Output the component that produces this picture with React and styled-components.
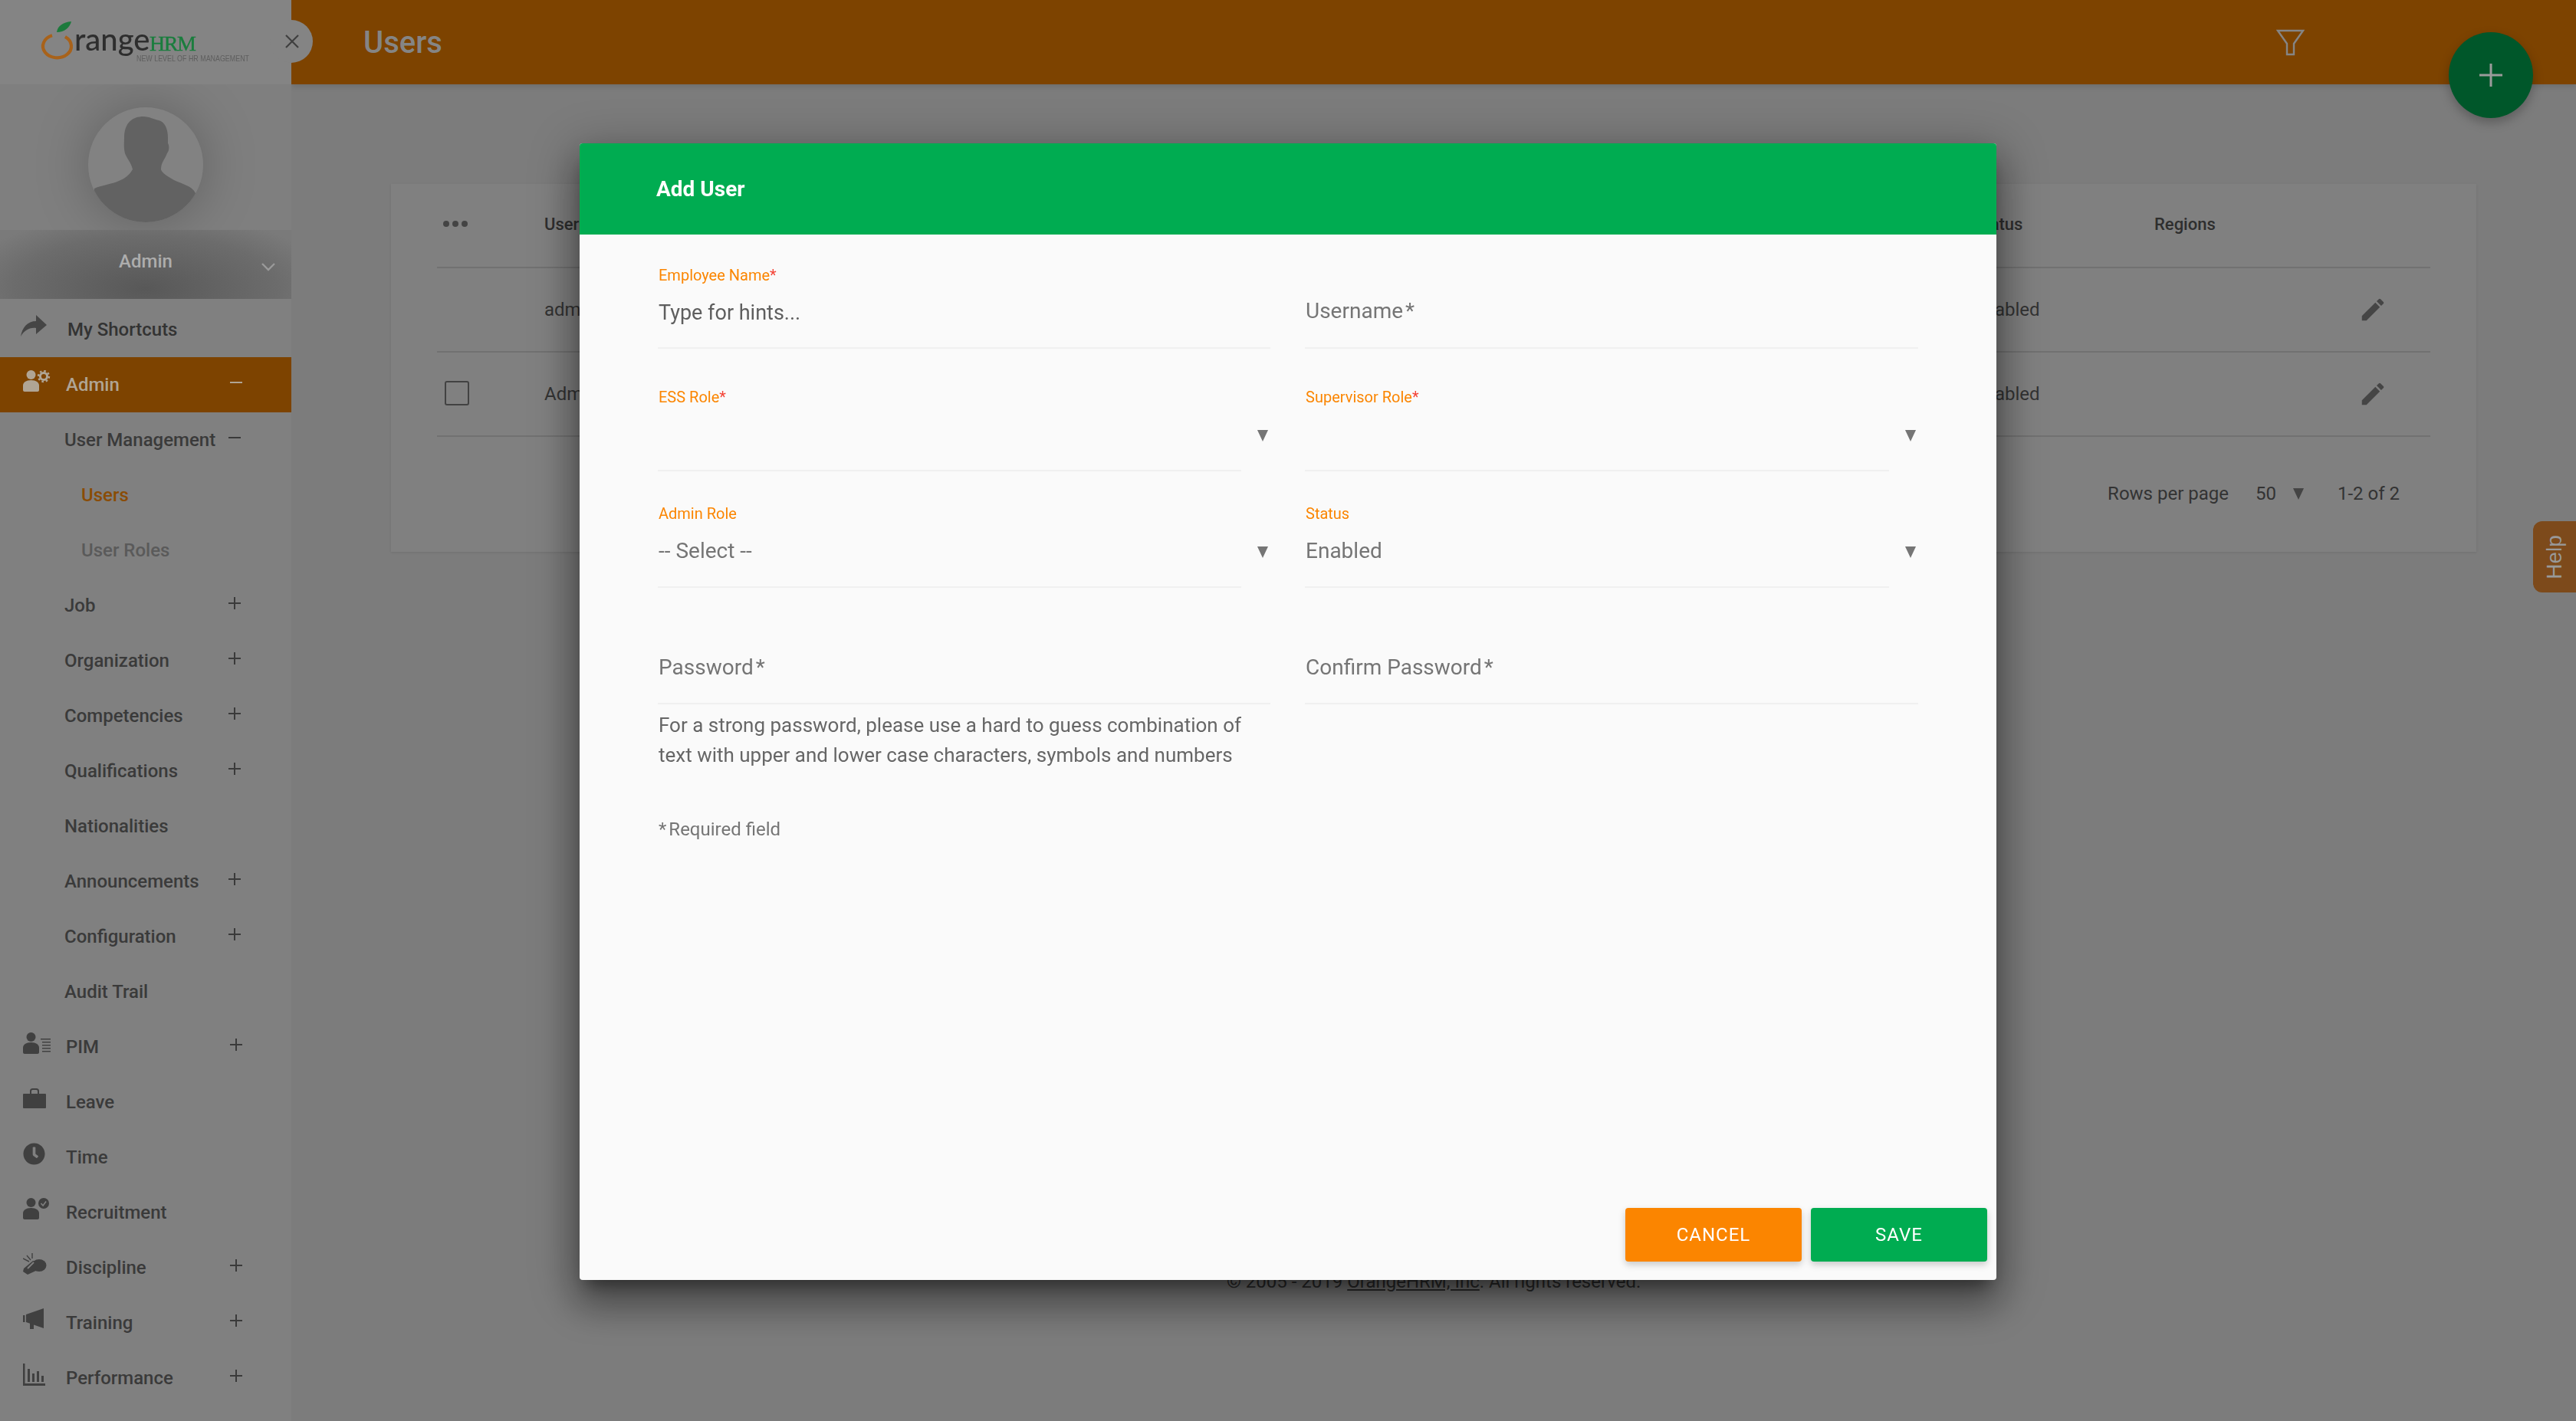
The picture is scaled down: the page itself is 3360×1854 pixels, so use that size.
import React from "react";
import styled, { createGlobalStyle } from "styled-components";
import { FaClock, FaGraduationCap } from "react-icons/fa";
import { MdEdit } from "react-icons/md";

const GlobalStyle = createGlobalStyle`
    html, body {
        margin: 0;
        width: 3360px;
        height: 1854px;
        overflow: hidden;
        background: #7c7c7c;
        font-family: Roboto, "Liberation Sans", sans-serif;
    }
    * { box-sizing: border-box; }
`;

const Person = () => (
    <>
        <circle cx="10.5" cy="6" r="6" />
        <path d="M0 26v-6c0-4 4-7 10.5-7S21 16 21 20v6c0 1-1 2-2 2H2c-1 0-2-1-2-2z" />
    </>
);

const AdminIcon = () => (
    <svg width="36" height="28" viewBox="0 0 36 28" fill="currentColor">
        <Person />
        <circle cx="27" cy="8" r="4.6" fill="none" stroke="currentColor" strokeWidth="3" />
        <circle cx="27" cy="8" r="7" fill="none" stroke="currentColor" strokeWidth="2.4" strokeDasharray="2.6 2.9" />
    </svg>
);

const PimIcon = () => (
    <svg width="36" height="28" viewBox="0 0 36 28" fill="currentColor">
        <Person />
        <path d="M23 8h13v1.4H23zM25 12h11v1.4H25zM25 16h11v1.4H25zM25 20h11v1.4H25zM25 24h11v1.4H25z" />
    </svg>
);

const RecruitIcon = () => (
    <svg width="36" height="28" viewBox="0 0 36 28" fill="currentColor">
        <Person />
        <circle cx="27" cy="7" r="7" />
        <path d="M23.5 7l2.6 3 4-5.5" fill="none" stroke="#808080" strokeWidth="1.6" />
    </svg>
);

const BriefcaseIcon = () => (
    <svg width="30" height="28" viewBox="0 0 30 28" fill="currentColor">
        <path d="M1 8h28a1 1 0 0 1 1 1v17a1 1 0 0 1-1 1H1a1 1 0 0 1-1-1V9a1 1 0 0 1 1-1z" />
        <path d="M10 8V4.5C10 3 11 2 12.5 2h5C19 2 20 3 20 4.5V8" fill="none" stroke="currentColor" strokeWidth="2" />
    </svg>
);

const WhistleIcon = () => (
    <svg width="32" height="30" viewBox="0 0 32 30" fill="currentColor">
        <ellipse cx="21" cy="16" rx="9.5" ry="8" />
        <path d="M13 10l7 2-1 10-13 6-6-4 1-4z" />
        <path d="M14 12l-8 8" fill="none" stroke="#808080" strokeWidth="1.8" />
        <path d="M0 7l8 4M5 3l5 6M12 0v7" fill="none" stroke="currentColor" strokeWidth="1.4" />
    </svg>
);

const MegaphoneIcon = () => (
    <svg width="28" height="28" viewBox="0 0 28 28" fill="currentColor">
        <path d="M0 9h2.5v9H0zM4 8L27 0v26L4 18zM9 19h5v8H9z" />
    </svg>
);

const ChartIcon = () => (
    <svg width="30" height="30" viewBox="0 0 30 30" fill="currentColor">
        <path d="M0 0h2.5v26H29v3H0z" />
        <path d="M6 7h3v17H6zM12 13h3v11h-3zM18 10h3v14h-3zM24 16h3v8h-3z" />
    </svg>
);

const ShareIcon = () => (
    <svg width="34" height="28" viewBox="0 0 34 28" fill="currentColor">
        <path d="M20 0l14 13-14 12v-8C11 16 5 20 0 28 2 16 9 8 20 8z" />
    </svg>
);

const Avatar = () => (
    <AvatarCircle>
        <svg width="150" height="150" viewBox="0 0 150 150" fill="#626262">
            <path d="M47 40C47 20 58 12 72 12c8 0 14 4 20 5 8 2 12 11 12 23v7c2 3 2 9-1 13-3 8-8 12-8 21 1 5 9 9 17 14 10 5 23 7 28 17v48H8v-54c8-4 24-6 32-10 8-3 14-8 18-15-2-9-8-15-10-21-2-8-1-14-1-20z" />
        </svg>
    </AvatarCircle>
);

const Logo = () => (
    <LogoMark width="290" height="70" viewBox="0 0 290 70">
        <path d="M18 24.3A18.5 15 0 1 0 35 26" fill="none" stroke="#a8621a" strokeWidth="4.2" />
        <path d="M24 20c1-8 8-13 19-14-2 8-9 14-19 14z" fill="#1c7a3c" />
        <text x="47" y="44" fontFamily="Lato, sans-serif" fontSize="40" fill="#2e2e2e">range</text>
        <text x="145" y="44" fontFamily="Liberation Serif, serif" fontSize="28" fill="#1a7d3d" stroke="#1a7d3d" strokeWidth="0.4" letterSpacing="-1.5">HRM</text>
        <text x="128" y="58" fontFamily="Liberation Sans, sans-serif" fontSize="10.5" fill="#5f5f5f" textLength="147" lengthAdjust="spacingAndGlyphs">NEW LEVEL OF HR MANAGEMENT</text>
    </LogoMark>
);

const menuItems = [
    { label: "Admin", icon: <AdminIcon />, sign: "minus", active: true },
    { label: "User Management", sign: "minus", sub: true },
    { label: "Users", deep: true, current: true },
    { label: "User Roles", deep: true, muted: true },
    { label: "Job", sign: "plus", sub: true },
    { label: "Organization", sign: "plus", sub: true },
    { label: "Competencies", sign: "plus", sub: true },
    { label: "Qualifications", sign: "plus", sub: true },
    { label: "Nationalities", sub: true },
    { label: "Announcements", sign: "plus", sub: true },
    { label: "Configuration", sign: "plus", sub: true },
    { label: "Audit Trail", sub: true },
    { label: "PIM", icon: <PimIcon />, sign: "plus" },
    { label: "Leave", icon: <BriefcaseIcon /> },
    { label: "Time", icon: <FaClock size={29} /> },
    { label: "Recruitment", icon: <RecruitIcon /> },
    { label: "Discipline", icon: <WhistleIcon />, sign: "plus" },
    { label: "Training", icon: <MegaphoneIcon />, sign: "plus" },
    { label: "Performance", icon: <ChartIcon />, sign: "plus" },
    { label: "", icon: <FaGraduationCap size={36} /> },
];

const Sign = ({ type, sub }) => (
    <SignMark $sub={sub} width="16" height="16" viewBox="0 0 16 16" stroke="currentColor" strokeWidth="2">
        <path d="M0 8h16" />
        {type === "plus" && <path d="M8 0v16" />}
    </SignMark>
);

const App = () => {
    return (
        <>
            <GlobalStyle />
            <Page>
                <Sidebar>
                    <LogoBar>
                        <Logo />
                        <CloseTab>
                            <svg width="20" height="20" viewBox="0 0 20 20" stroke="#3f3f3f" strokeWidth="2.2">
                                <path d="M2 2l16 16M18 2L2 18" />
                            </svg>
                        </CloseTab>
                    </LogoBar>
                    <AvatarZone>
                        <Avatar />
                    </AvatarZone>
                    <NameBand>
                        Admin
                        <NameChevron width="20" height="12" viewBox="0 0 20 12" fill="none" stroke="#9a9a9a" strokeWidth="2.4">
                            <path d="M2 2l8 8 8-8" />
                        </NameChevron>
                    </NameBand>
                    <ShortcutRow>
                        <ShortcutIcon><ShareIcon /></ShortcutIcon>
                        My Shortcuts
                    </ShortcutRow>
                    {menuItems.map((item) => (
                        <MenuRow key={item.label || "more"} $active={item.active} $sub={item.sub} $deep={item.deep} $current={item.current} $muted={item.muted}>
                            {item.icon && <MenuIcon $active={item.active}>{item.icon}</MenuIcon>}
                            {item.label}
                            {item.sign && <Sign type={item.sign} sub={item.sub} />}
                        </MenuRow>
                    ))}
                </Sidebar>
                <Main>
                    <TopBar>
                        <Title>Users</Title>
                        <svg width="37" height="35" viewBox="0 0 37 35" fill="none" stroke="#858585" strokeWidth="2.4">
                            <path d="M2 2h33L23 19v14h-9V19z" />
                        </svg>
                    </TopBar>
                    <Fab>
                        <svg width="30" height="30" viewBox="0 0 30 30" stroke="#9b9b9b" strokeWidth="3">
                            <path d="M0 15h30M15 0v30" />
                        </svg>
                    </Fab>
                    <Card>
                        <TableRow $head>
                            <SelectCell><Dot /><Dot /><Dot /></SelectCell>
                            <UserCell>Username</UserCell>
                            <StatusCell>Status</StatusCell>
                            <RegionCell>Regions</RegionCell>
                        </TableRow>
                        <TableRow>
                            <SelectCell />
                            <UserCell>admin</UserCell>
                            <StatusCell>Enabled</StatusCell>
                            <RegionCell />
                            <EditCell><MdEdit size={38} /></EditCell>
                        </TableRow>
                        <TableRow>
                            <SelectCell><Checkbox /></SelectCell>
                            <UserCell>Admin</UserCell>
                            <StatusCell>Enabled</StatusCell>
                            <RegionCell />
                            <EditCell><MdEdit size={38} /></EditCell>
                        </TableRow>
                        <Pager>
                            <span>Rows per page</span>
                            <PageSize>50</PageSize>
                            <PagerArrow />
                            <span>1-2 of 2</span>
                        </Pager>
                    </Card>
                    <Footer>© 2005 - 2019 <u>OrangeHRM, Inc</u>. All rights reserved.</Footer>
                    <HelpTab><span>Help</span></HelpTab>
                </Main>
            </Page>
            <Overlay>
                <Modal>
                    <ModalHeader>Add User</ModalHeader>
                    <ModalBody>
                        <FieldGrid>
                            <Field $row={1}>
                                <Label>Employee Name<Star>*</Star></Label>
                                <Value $dark>Type for hints...</Value>
                            </Field>
                            <Field $row={1}>
                                <Label />
                                <Value $lift>Username<Mark>*</Mark></Value>
                            </Field>
                            <Field $row={2}>
                                <Label>ESS Role<Star>*</Star></Label>
                                <Value $select />
                                <Arrow $row={2} />
                            </Field>
                            <Field $row={2}>
                                <Label>Supervisor Role<Star>*</Star></Label>
                                <Value $select />
                                <Arrow $row={2} />
                            </Field>
                            <Field $row={3}>
                                <Label>Admin Role</Label>
                                <Value $select>-- Select --</Value>
                                <Arrow $row={3} />
                            </Field>
                            <Field $row={3}>
                                <Label>Status</Label>
                                <Value $select>Enabled</Value>
                                <Arrow $row={3} />
                            </Field>
                            <Field $row={4}>
                                <Hint>Password<Mark>*</Mark></Hint>
                            </Field>
                            <Field $row={4}>
                                <Hint>Confirm Password<Mark>*</Mark></Hint>
                            </Field>
                        </FieldGrid>
                        <PasswordNote>
                            For a strong password, please use a hard to guess combination of<br />
                            text with upper and lower case characters, symbols and numbers
                        </PasswordNote>
                        <RequiredNote><Mark $tight>*</Mark>Required field</RequiredNote>
                        <Actions>
                            <ActionButton $cancel>CANCEL</ActionButton>
                            <ActionButton>SAVE</ActionButton>
                        </Actions>
                    </ModalBody>
                </Modal>
            </Overlay>
        </>
    );
};

const Page = styled.div`
    display: flex;
    width: 3360px;
    height: 1854px;
    overflow: hidden;
`;
const Sidebar = styled.aside`
    position: relative;
    z-index: 2;
    flex: 0 0 380px;
    background: #808080;
    color: #363636;
    font-size: 24px;
    font-weight: 500;
`;
const LogoBar = styled.div`
    position: relative;
    height: 110px;
    padding: 22px 0 0 50px;
    background: #848484;
`;
const LogoMark = styled.svg`
    display: block;
    filter: blur(0.6px);
`;
const CloseTab = styled.div`
    position: absolute;
    left: 352px;
    top: 26px;
    width: 56px;
    height: 56px;
    border-radius: 50%;
    background: #848484;
    display: flex;
    align-items: center;
    justify-content: center;
    padding-left: 2px;
`;
const AvatarZone = styled.div`
    height: 190px;
    padding-top: 30px;
    display: flex;
    justify-content: center;
    background: #7f7f7f;
`;
const AvatarCircle = styled.div`
    width: 150px;
    height: 150px;
    border-radius: 50%;
    background: #828282;
    overflow: hidden;
    box-shadow: 0 0 70px rgba(0, 0, 0, 0.25);
`;
const NameBand = styled.div`
    position: relative;
    height: 90px;
    padding-top: 27px;
    text-align: center;
    line-height: 28px;
    color: #adadad;
    background: radial-gradient(ellipse 65% 110% at 50% 85%, #585858 0%, #6c6c6c 70%, #7a7a7a 100%);
`;
const NameChevron = styled.svg`
    position: absolute;
    right: 20px;
    top: 42px;
`;
const ShortcutRow = styled.div`
    position: relative;
    height: 76px;
    padding: 24px 0 0 88px;
    line-height: 32px;
    color: #333333;
`;
const ShortcutIcon = styled.span`
    position: absolute;
    left: 27px;
    top: 21px;
    line-height: 0;
    color: #454545;
`;
const MenuRow = styled.div`
    position: relative;
    height: 72px;
    line-height: 72px;
    padding-left: ${(p) => (p.$deep ? "106px" : p.$sub ? "84px" : "86px")};
    background: ${(p) => (p.$active ? "#7d4300" : "transparent")};
    color: ${(p) => (p.$active ? "#b0a595" : p.$current ? "#8a4c05" : p.$muted ? "#5a5a5a" : "#3a3a3a")};
`;
const MenuIcon = styled.span`
    position: absolute;
    left: 30px;
    top: 17px;
    line-height: 0;
    color: ${(p) => (p.$active ? "#b0a595" : "#404040")};
`;
const SignMark = styled.svg`
    position: absolute;
    left: ${(p) => (p.$sub ? "298px" : "300px")};
    top: 25px;
`;
const Main = styled.main`
    position: relative;
    flex: 1;
    display: flex;
    flex-direction: column;
    background: #7c7c7c;
`;
const TopBar = styled.header`
    height: 110px;
    flex: none;
    padding: 0 354px 0 94px;
    display: flex;
    align-items: center;
    justify-content: space-between;
    background: #7d4300;
    box-shadow: 0 2px 8px rgba(0, 0, 0, 0.15);
`;
const Title = styled.h1`
    margin: 0;
    font-size: 40px;
    font-weight: 500;
    color: #858585;
`;
const Fab = styled.div`
    position: absolute;
    right: 56px;
    top: 42px;
    width: 110px;
    height: 112px;
    border-radius: 50%;
    background: #00572a;
    box-shadow: 0 6px 14px rgba(0, 0, 0, 0.25);
    display: flex;
    align-items: center;
    justify-content: center;
`;
const Card = styled.section`
    width: 2720px;
    height: 480px;
    margin: 130px 0 0 130px;
    padding: 0 60px;
    flex: none;
    background: #808080;
    box-shadow: 0 1px 3px rgba(0, 0, 0, 0.1);
    color: #333333;
    font-size: 24px;
`;
const TableRow = styled.div`
    display: flex;
    align-items: center;
    height: 110px;
    padding-bottom: ${(p) => (p.$head ? "4px" : "0")};
    border-bottom: 2px solid #717171;
    font-weight: ${(p) => (p.$head ? 500 : 400)};
    font-size: ${(p) => (p.$head ? "22px" : "24px")};
    color: ${(p) => (p.$head ? "#2e2e2e" : "#333333")};
`;
const SelectCell = styled.div`
    display: flex;
    gap: 4px;
    width: 140px;
    padding-left: 8px;
`;
const Dot = styled.i`
    width: 8px;
    height: 8px;
    border-radius: 50%;
    background: #444444;
`;
const Checkbox = styled.div`
    width: 32px;
    height: 32px;
    margin: -2px 0 0 2px;
    border: 2px solid #424242;
    border-radius: 3px;
`;
const UserCell = styled.div`
    width: 1865px;
`;
const StatusCell = styled.div`
    width: 235px;
`;
const RegionCell = styled.div`
    width: 266px;
`;
const EditCell = styled.div`
    color: #454545;
    line-height: 0;
`;
const Pager = styled.div`
    display: flex;
    align-items: center;
    justify-content: flex-end;
    height: 148px;
    padding-right: 40px;
`;
const PageSize = styled.span`
    margin-left: 35px;
`;
const PagerArrow = styled.span`
    margin: 0 44px 0 22px;
    border-left: 7.5px solid transparent;
    border-right: 7.5px solid transparent;
    border-top: 15px solid #444444;
`;
const Footer = styled.footer`
    position: absolute;
    left: 1220px;
    top: 1658px;
    font-size: 24px;
    color: #2e2e2e;
    white-space: nowrap;
`;
const HelpTab = styled.div`
    position: absolute;
    right: 0;
    top: 680px;
    width: 56px;
    height: 93px;
    border-radius: 12px 0 0 12px;
    background: #7d4a1b;
    display: flex;
    align-items: center;
    justify-content: center;
    font-family: "Liberation Sans", sans-serif;
    font-size: 28px;
    color: #999999;
    & > span {
        transform: rotate(-90deg);
    }
`;
const Overlay = styled.div`
    position: fixed;
    z-index: 5;
    inset: 0;
    display: flex;
    justify-content: center;
    padding-top: 187px;
`;
const Modal = styled.div`
    width: 1848px;
    height: 1483px;
    display: flex;
    flex-direction: column;
    border-radius: 4px;
    overflow: hidden;
    background: #fafafa;
    box-shadow: 0 32px 48px 4px rgba(0, 0, 0, 0.28), 0 12px 60px 10px rgba(0, 0, 0, 0.24), 0 16px 20px -10px rgba(0, 0, 0, 0.4);
`;
const ModalHeader = styled.div`
    height: 119px;
    flex: none;
    padding-left: 100px;
    display: flex;
    align-items: center;
    background: #00ac51;
    color: #ffffff;
    font-size: 28px;
    font-weight: 700;
`;
const ModalBody = styled.div`
    flex: 1;
    display: flex;
    flex-direction: column;
    padding: 0 12px 24px 102px;
`;
const FieldGrid = styled.div`
    display: grid;
    grid-template-columns: 799px 800px;
    column-gap: 45px;
`;
const fieldSpace = {
    1: { height: "149px", top: "39px" },
    2: { height: "160px", top: "49px" },
    3: { height: "152px", top: "41px" },
    4: { height: "152px", top: "44px" },
};
const Field = styled.div`
    position: relative;
    height: ${(p) => fieldSpace[p.$row].height};
    padding-top: ${(p) => fieldSpace[p.$row].top};
`;
const Label = styled.div`
    height: 30px;
    padding-left: 1px;
    line-height: 29px;
    font-size: 20px;
    color: #fb8500;
`;
const Star = styled.span`
    color: #f44336;
`;
const Mark = styled.span`
    margin-left: ${(p) => (p.$tight ? "0" : "3px")};
    margin-right: ${(p) => (p.$tight ? "3px" : "0")};
`;
const Value = styled.div`
    height: ${(p) => (p.$select ? "81px" : "80px")};
    margin-right: ${(p) => (p.$select ? "38px" : "0")};
    padding-left: 1px;
    line-height: ${(p) => (p.$lift ? "62px" : p.$select ? "66px" : "66px")};
    border-bottom: 2px solid #f0f0f0;
    font-size: ${(p) => (p.$dark ? "27px" : "28px")};
    color: ${(p) => (p.$dark ? "#5e5e5e" : "#757575")};
`;
const Hint = styled.div`
    height: 108px;
    padding-left: 1px;
    line-height: 119px;
    border-bottom: 2px solid #f0f0f0;
    font-size: 28px;
    color: #757575;
`;
const Arrow = styled.span`
    position: absolute;
    right: 3px;
    top: ${(p) => (p.$row === 2 ? "106px" : "98px")};
    border-left: 7.5px solid transparent;
    border-right: 7.5px solid transparent;
    border-top: 15px solid #757575;
`;
const PasswordNote = styled.p`
    margin: 8px 0 0;
    padding-left: 1px;
    font-size: 26px;
    line-height: 39px;
    color: #666666;
`;
const RequiredNote = styled.p`
    margin: 63px 0 0;
    padding-left: 1px;
    font-size: 24px;
    line-height: 28px;
    color: #757575;
`;
const Actions = styled.div`
    margin-top: auto;
    display: flex;
    justify-content: flex-end;
    gap: 12px;
`;
const ActionButton = styled.button`
    width: 230px;
    height: 70px;
    border: none;
    border-radius: 4px;
    background: ${(p) => (p.$cancel ? "#fb8500" : "#00ac51")};
    color: #ffffff;
    font-family: inherit;
    font-size: 24px;
    letter-spacing: 1px;
    box-shadow: 0 4px 10px rgba(0, 0, 0, 0.2);
`;

export default App;
